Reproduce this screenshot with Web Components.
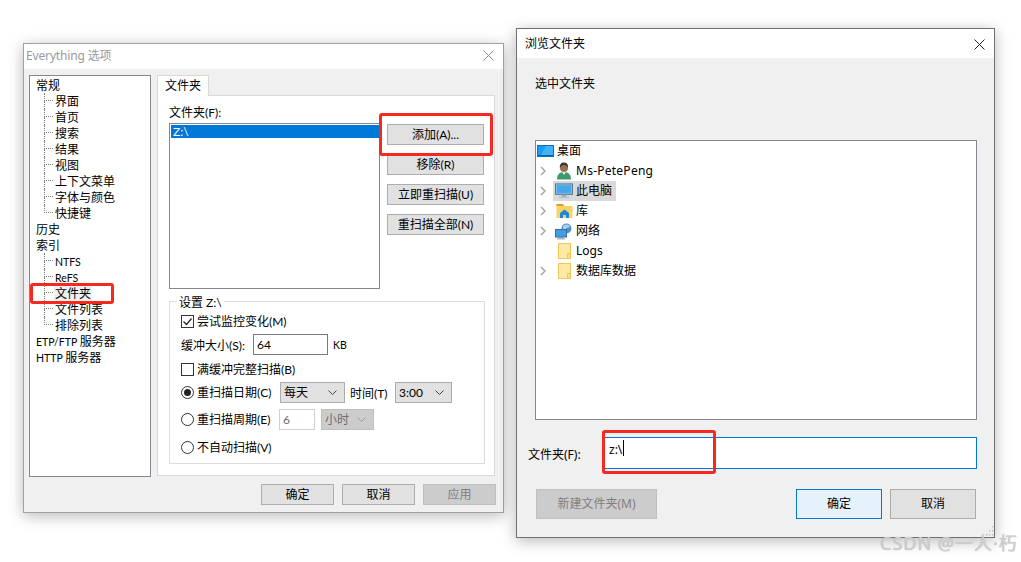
<!DOCTYPE html>
<html>
<head>
<meta charset="utf-8">
<style>
  html, body { margin: 0; height: 100%; background: #fff; overflow: hidden; }
  body { font: 12px "Noto Sans", "Noto Sans CJK SC", sans-serif; color: #000; }
</style>
</head>
<body>
<desk-top></desk-top>
<script>
const FONT = `"Noto Sans", "Noto Sans CJK SC", sans-serif`;
const FONT_SMALL = `Lato, "Noto Sans CJK SC", sans-serif`;

class DialogWindow extends HTMLElement {
  constructor() {
    super();
    this.attachShadow({ mode: "open" });
    const inactive = this.hasAttribute("inactive");
    this.shadowRoot.innerHTML = `
      <style>
        :host {
          display: flex;
          flex-direction: column;
          position: absolute;
          box-sizing: border-box;
          background: #f0f0f0;
          border: 1px solid ${inactive ? "#a0a0a0" : "#707070"};
          box-shadow: 0 3px 14px rgba(0,0,0,.28);
        }
        .title {
          flex: none;
          box-sizing: border-box;
          height: var(--title-h, 25px);
          background: #fff;
          display: flex;
          align-items: center;
          justify-content: space-between;
          padding: var(--title-top, 0) var(--close-pad, 9px) var(--title-bottom, 2px) var(--title-pad, 2px);
          line-height: 16px;
          letter-spacing: var(--title-track, 0);
          color: ${inactive ? "#999" : "#000"};
        }
        svg { display: block; }
        .body { flex: 1; min-height: 0; }
      </style>
      <div class="title">
        <span>${this.getAttribute("heading")}</span>
        <svg width="11" height="11" viewBox="0 0 11 11">
          <path d="M.5.5l10 10M10.5.5l-10 10" fill="none" stroke="${inactive ? "#8a8a8a" : "#222"}"/>
        </svg>
      </div>
      <div class="body"><slot></slot></div>
    `;
  }
}

class PushButton extends HTMLElement {
  constructor() {
    super();
    this.attachShadow({ mode: "open" });
    this.shadowRoot.innerHTML = `
      <style>
        :host {
          display: flex;
          align-items: center;
          justify-content: center;
          box-sizing: border-box;
          height: var(--btn-h, 21px);
          padding-top: var(--btn-pad, 1px);
          background: #e1e1e1;
          border: 1px solid #adadad;
          line-height: 16px;
          white-space: nowrap;
        }
        :host([disabled]) { background: #cccccc; border-color: #bfbfbf; color: #7f7f7f; }
        :host([primary]) { background: #e5f1fb; border-color: #0078d7; }
      </style>
      <slot></slot>
    `;
  }
}

class TreeRow extends HTMLElement {
  constructor() {
    super();
    this.attachShadow({ mode: "open" });
    this.shadowRoot.innerHTML = `
      <style>
        :host {
          display: flex;
          align-items: center;
          position: relative;
          height: 16px;
          padding-left: 5px;
          line-height: 16px;
          white-space: nowrap;
        }
        :host([child]) { padding-left: 24px; }
        :host([child])::before {
          content: "";
          position: absolute;
          left: 14px;
          top: -1px;
          width: 9px;
          height: 8px;
          border-left: 1px dotted #808080;
          border-bottom: 1px dotted #808080;
          box-sizing: border-box;
        }
        :host([child]:not([last]))::after {
          content: "";
          position: absolute;
          left: 14px;
          top: 7px;
          height: 8px;
          border-left: 1px dotted #808080;
        }
        span { padding: 0 1px; }
        :host([selected]) span { background: #f0f0f0; }
      </style>
      <span><slot></slot></span>
    `;
  }
}

class ToggleRow extends HTMLElement {
  constructor() {
    super();
    this.attachShadow({ mode: "open" });
    const radio = this.getAttribute("kind") === "radio";
    const checked = this.hasAttribute("checked");
    const mark = radio
      ? `<circle cx="6.5" cy="6.5" r="6" fill="#fff" stroke="#333"/>${checked ? '<circle cx="6.5" cy="6.5" r="3.5" fill="#222"/>' : ""}`
      : `<rect x=".5" y=".5" width="12" height="12" fill="#fff" stroke="#333"/>${checked ? '<path d="M2.5 6.5l3 3 5-6" fill="none" stroke="#222" stroke-width="1.2"/>' : ""}`;
    this.shadowRoot.innerHTML = `
      <style>
        :host {
          display: flex;
          align-items: center;
          gap: 3px;
          line-height: 16px;
          white-space: nowrap;
        }
        svg { display: block; flex: none; }
        span { padding-top: 1px; }
      </style>
      <svg width="13" height="13" viewBox="0 0 13 13">${mark}</svg>
      <span><slot></slot></span>
    `;
  }
}

class ComboBox extends HTMLElement {
  constructor() {
    super();
    this.attachShadow({ mode: "open" });
    const off = this.hasAttribute("disabled");
    this.shadowRoot.innerHTML = `
      <style>
        :host {
          display: flex;
          align-items: center;
          justify-content: space-between;
          box-sizing: border-box;
          height: 21px;
          padding: 0 7px 0 3px;
          background: ${off ? "#cccccc" : "#e1e1e1"};
          border: 1px solid ${off ? "#bfbfbf" : "#adadad"};
          color: ${off ? "#6d6d6d" : "#000"};
          line-height: 16px;
          white-space: nowrap;
        }
        svg { display: block; }
      </style>
      <slot></slot>
      <svg width="9" height="5" viewBox="0 0 9 5"><path d="M.5.5l4 4 4-4" fill="none" stroke="${off ? "#9a9a9a" : "#444"}"/></svg>
    `;
  }
}

class RedMark extends HTMLElement {
  constructor() {
    super();
    this.attachShadow({ mode: "open" });
    this.shadowRoot.innerHTML = `
      <style>
        :host {
          position: absolute;
          box-sizing: border-box;
          border: 3px solid #f5291f;
          border-radius: 3px;
          pointer-events: none;
        }
      </style>
    `;
  }
}

const ICONS = {
  desktop: `<svg width="17" height="12" viewBox="0 0 17 12"><rect x=".5" y=".5" width="16" height="11" fill="#1a9cf2" stroke="#0a6fc4"/><path d="M9 1h7v9h-12z" fill="#45b4f7"/><path d="M1 10h15v1h-15z" fill="#0b5fa8"/></svg>`,
  user: `<svg width="16" height="18" viewBox="0 0 16 18"><path d="M1 17.5c0-5 2.5-7.5 7-7.5s7 2.500 7 7.500z" fill="#3f9a6b"/><path d="M6 10l2 3 2-3z" fill="#e8f3ec"/><circle cx="8" cy="6" r="4" fill="#9b7152"/><path d="M4 6c-1-4 2-6 4.500-5.500s4 2 3.500 5.500c-1-2-2-3-4-3s-3 1-4 3z" fill="#3c3430"/></svg>`,
  computer: `<svg width="19" height="16" viewBox="0 0 19 16"><rect x=".5" y=".5" width="18" height="11" fill="#7cc4f0" stroke="#55748e"/><rect x="2" y="2" width="15" height="8" fill="#46a7e8"/><path d="M7 12h5v2h-5z" fill="#90a4b3"/><path d="M4 14h11v1.500h-11z" fill="#b4c1cb"/></svg>`,
  library: `<svg width="17" height="16" viewBox="0 0 17 16"><path d="M.5 1h6l2 2h8v12h-16z" fill="#f9d262"/><path d="M.5 1h6l2 2h-8z" fill="#d79f2f"/><path d="M4 10l4.500-3.500 4.500 3.500v5h-3v-3h-3v3h-3z" fill="#1f86d8"/></svg>`,
  network: `<svg width="18" height="17" viewBox="0 0 18 17"><circle cx="11.500" cy="5.500" r="5" fill="#4d8fc9"/><path d="M8 3c2-2 5-2 7 0-1 2-2 1-3 2s-2 2-4 1z" fill="#a9d0ee"/><rect x=".5" y="6.500" width="11" height="7.500" fill="#3f9fe3" stroke="#3b6f98"/><path d="M4 14h4v1h-4z" fill="#8299aa"/><path d="M2 15h8v1.500h-8z" fill="#a9bac6"/></svg>`,
  folder: `<svg width="13" height="16" viewBox="0 0 13 16"><path d="M.5.500h12v15h-12z" fill="#fde9a4" stroke="#eec75a"/><path d="M9.500 10.500h3v5h-3z" fill="#fbdd80" stroke="#eec75a"/></svg>`
};

class FolderRow extends HTMLElement {
  constructor() {
    super();
    this.attachShadow({ mode: "open" });
    const expand = this.hasAttribute("expand");
    const icon = ICONS[this.getAttribute("icon")];
    this.shadowRoot.innerHTML = `
      <style>
        :host {
          display: flex;
          align-items: center;
          height: 20px;
          padding-left: 4px;
          white-space: nowrap;
          line-height: 16px;
        }
        :host([root]) { padding-left: 0; }
        .arrow { width: 13px; flex: none; display: flex; }
        .item { display: flex; align-items: center; height: 20px; padding: 0 4px 0 2px; gap: 3px; }
        .icon { width: 18px; display: flex; justify-content: center; flex: none; }
        :host([selected]) .item { background: #d9d9d9; }
        :host([root]) .arrow { display: none; }
        :host([root]) .item { padding-left: 0; }
        svg { display: block; }
      </style>
      <div class="arrow">${expand ? '<svg width="6" height="10" viewBox="0 0 6 10"><path d="M1 1l4 4-4 4" fill="none" stroke="#a6a6a6" stroke-width="1.500"/></svg>' : ""}</div>
      <div class="item"><div class="icon">${icon}</div><span><slot></slot></span></div>
    `;
  }
}

class OptionsPage extends HTMLElement {
  constructor() {
    super();
    this.attachShadow({ mode: "open" });
    this.shadowRoot.innerHTML = `
      <style>
        :host { display: block; font-family: ${FONT_SMALL}; }
        .main { display: flex; gap: 6px; padding: 6px 0 0 5px; }
        .tree {
          box-sizing: border-box;
          width: 122px;
          height: 402px;
          padding-top: 2px;
          background: #fff;
          border: 1px solid #828790;
        }
        /* the latin of the tree and the unit is smaller than the cjk beside it */
        .sm { font-size: 10.5px; }
        .tabs { width: 338px; }
        .tab {
          box-sizing: border-box;
          width: 52px;
          height: 21px;
          margin-bottom: -1px;
          position: relative;
          background: #fff;
          border: 1px solid #d9d9d9;
          border-bottom: 0;
          text-align: center;
          line-height: 20px;
        }
        .panel {
          box-sizing: border-box;
          height: 381px;
          padding: 8px 0 0 11px;
          background: #fff;
          border: 1px solid #d9d9d9;
        }
        .top { display: grid; grid-template-columns: 211px 97px; column-gap: 7px; }
        .lbl { grid-column: 1 / 3; box-sizing: border-box; height: 19px; padding-top: 1px; line-height: 16px; }
        .list {
          box-sizing: border-box;
          height: 166px;
          padding: 1px 0 1px 1px;
          background: #fff;
          border: 1px solid #828790;
        }
        .sel { height: 13px; line-height: 13px; background: #0078d7; color: #fff; padding-left: 2px; }
        .side { display: flex; flex-direction: column; gap: 9px; padding-top: 1px; }
        .group {
          box-sizing: border-box;
          position: relative;
          width: 316px;
          height: 163px;
          margin-top: 12px;
          padding: 9px 0 0 11px;
          border: 1px solid #dcdcdc;
        }
        .legend {
          position: absolute;
          left: 7px;
          top: -7px;
          padding: 0 2px;
          background: #fff;
          line-height: 16px;
        }
        .row { display: flex; align-items: center; }
        .r1 { height: 20px; }
        .r2 { height: 21px; margin-top: 3px; }
        .r3 { height: 20px; margin-top: 4px; }
        .r4 { height: 21px; margin-top: 3px; }
        .r5 { height: 21px; margin-top: 6px; }
        .r6 { height: 20px; margin-top: 7px; }
        .edit {
          box-sizing: border-box;
          height: 21px;
          padding-left: 3px;
          border: 1px solid #7a7a7a;
          background: #fff;
          line-height: 19px;
        }
        .edit.off { border-color: #d0d0d0; color: #6d6d6d; }
        .foot { display: flex; justify-content: flex-end; gap: 8px; padding: 7px 7px 0 0; }
        .foot push-button { width: 73px; }
      </style>
      <div class="main">
        <div class="tree">
          <tree-row>常规</tree-row>
          <tree-row child>界面</tree-row>
          <tree-row child>首页</tree-row>
          <tree-row child>搜索</tree-row>
          <tree-row child>结果</tree-row>
          <tree-row child>视图</tree-row>
          <tree-row child>上下文菜单</tree-row>
          <tree-row child>字体与颜色</tree-row>
          <tree-row child last>快捷键</tree-row>
          <tree-row>历史</tree-row>
          <tree-row>索引</tree-row>
          <tree-row child class="sm">NTFS</tree-row>
          <tree-row child class="sm">ReFS</tree-row>
          <tree-row child selected>文件夹</tree-row>
          <tree-row child>文件列表</tree-row>
          <tree-row child last>排除列表</tree-row>
          <tree-row><span class="sm">ETP/FTP </span>服务器</tree-row>
          <tree-row><span class="sm">HTTP </span>服务器</tree-row>
        </div>
        <div class="tabs">
          <div class="tab">文件夹</div>
          <div class="panel">
            <div class="top">
              <div class="lbl">文件夹(F):</div>
              <div class="list"><div class="sel">Z:\\</div></div>
              <div class="side">
                <push-button>添加(A)...</push-button>
                <push-button>移除(R)</push-button>
                <push-button>立即重扫描(U)</push-button>
                <push-button>重扫描全部(N)</push-button>
              </div>
            </div>
            <div class="group">
              <div class="legend">设置 Z:\\</div>
              <div class="row r1"><toggle-row kind="check" checked>尝试监控变化(M)</toggle-row></div>
              <div class="row r2">
                <span style="width:72px">缓冲大小(S):</span>
                <div class="edit" style="width:75px">64</div>
                <span class="sm" style="margin-left:5px">KB</span>
              </div>
              <div class="row r3"><toggle-row kind="check">满缓冲完整扫描(B)</toggle-row></div>
              <div class="row r4">
                <toggle-row kind="radio" checked style="width:99px">重扫描日期(C)</toggle-row>
                <combo-box style="width:65px">每天</combo-box>
                <span style="width:45px;margin-left:5px">时间(T)</span>
                <combo-box style="width:57px">3:00</combo-box>
              </div>
              <div class="row r5">
                <toggle-row kind="radio" style="width:98px">重扫描周期(E)</toggle-row>
                <div class="edit off" style="width:36px">6</div>
                <combo-box disabled style="width:53px;margin-left:6px">小时</combo-box>
              </div>
              <div class="row r6"><toggle-row kind="radio">不自动扫描(V)</toggle-row></div>
            </div>
          </div>
        </div>
      </div>
      <div class="foot">
        <push-button>确定</push-button>
        <push-button>取消</push-button>
        <push-button disabled>应用</push-button>
      </div>
    `;
  }
}

class BrowsePage extends HTMLElement {
  constructor() {
    super();
    this.attachShadow({ mode: "open" });
    this.shadowRoot.innerHTML = `
      <style>
        :host { display: block; font-family: ${FONT}; --btn-h: 30px; --btn-pad: 0; padding: 17px 17px 0 18px; }
        .hint { box-sizing: border-box; height: 17px; padding-top: 1px; line-height: 16px; }
        .tree {
          box-sizing: border-box;
          height: 280px;
          margin-top: 48px;
          background: #fff;
          border: 1px solid #828790;
        }
        .path { display: flex; align-items: center; height: 32px; margin: 17px 0 0 -7px; }
        .path span { width: 76px; padding-top: 2px; }
        .input {
          box-sizing: border-box;
          flex: 1;
          height: 32px;
          padding: 4px 0 0 4px;
          background: #fff;
          border: 1px solid #0078d7;
          line-height: 16px;
          display: flex;
          align-items: flex-start;
        }
        .caret { width: 1px; height: 16px; margin: -2px 0 0 1px; background: #000; }
        .foot { display: flex; gap: 8px; margin-top: 20px; padding: 0 1px; }
        .foot push-button { width: 86px; }
        .foot push-button:first-child { width: 121px; margin-right: auto; }
      </style>
      <div class="hint">选中文件夹</div>
      <div class="tree">
        <folder-row root icon="desktop">桌面</folder-row>
        <folder-row expand icon="user" style="letter-spacing:.25px">Ms-PetePeng</folder-row>
        <folder-row expand selected icon="computer">此电脑</folder-row>
        <folder-row expand icon="library">库</folder-row>
        <folder-row expand icon="network">网络</folder-row>
        <folder-row icon="folder">Logs</folder-row>
        <folder-row expand icon="folder">数据库数据</folder-row>
      </div>
      <div class="path">
        <span>文件夹(F):</span>
        <div class="input">z:\\<i class="caret"></i></div>
      </div>
      <div class="foot">
        <push-button disabled>新建文件夹(M)</push-button>
        <push-button primary>确定</push-button>
        <push-button>取消</push-button>
      </div>
    `;
  }
}

class DeskTop extends HTMLElement {
  constructor() {
    super();
    this.attachShadow({ mode: "open" });
    this.shadowRoot.innerHTML = `
      <style>
        :host { display: block; position: relative; width: 1021px; height: 562px; overflow: hidden; }
        .left { left: 23px; top: 43px; width: 481px; height: 470px; --title-track: -.15px; }
        .right { left: 516px; top: 28px; width: 479px; height: 510px; --title-h: 29px; --title-top: 1px; --title-bottom: 0; --title-pad: 8px; --close-pad: 9px; }
        .grip { position: absolute; left: 985px; top: 526px; }
        .mark {
          position: absolute;
          left: 880px;
          top: 531px;
          font: 18px/24px "Noto Sans", "Noto Sans CJK SC", sans-serif;
          letter-spacing: 1px;
          color: #cfcfcf;
          white-space: nowrap;
          text-shadow: 0 0 1px #aaa;
        }
      </style>
      <dialog-window class="left" inactive heading="Everything 选项"><options-page></options-page></dialog-window>
      <dialog-window class="right" heading="浏览文件夹"><browse-page></browse-page></dialog-window>
      <red-mark style="left:379px;top:113px;width:114px;height:43px"></red-mark>
      <red-mark style="left:30px;top:283px;width:84px;height:21px"></red-mark>
      <red-mark style="left:602px;top:430px;width:114px;height:44px"></red-mark>
      <svg class="grip" width="9" height="10" viewBox="0 0 9 10" fill="#bdbdbd">
        <rect x="7" y="0" width="1.500" height="1.500"/><rect x="4" y="4" width="1.500" height="1.500"/><rect x="7" y="4" width="1.500" height="1.500"/><rect x="1" y="8" width="1.500" height="1.500"/><rect x="4" y="8" width="1.500" height="1.500"/><rect x="7" y="8" width="1.500" height="1.500"/>
      </svg>
      <div class="mark">CSDN @一人·朽</div>
    `;
  }
}

customElements.define("dialog-window", DialogWindow);
customElements.define("push-button", PushButton);
customElements.define("tree-row", TreeRow);
customElements.define("toggle-row", ToggleRow);
customElements.define("combo-box", ComboBox);
customElements.define("red-mark", RedMark);
customElements.define("folder-row", FolderRow);
customElements.define("options-page", OptionsPage);
customElements.define("browse-page", BrowsePage);
customElements.define("desk-top", DeskTop);
</script>
</body>
</html>
